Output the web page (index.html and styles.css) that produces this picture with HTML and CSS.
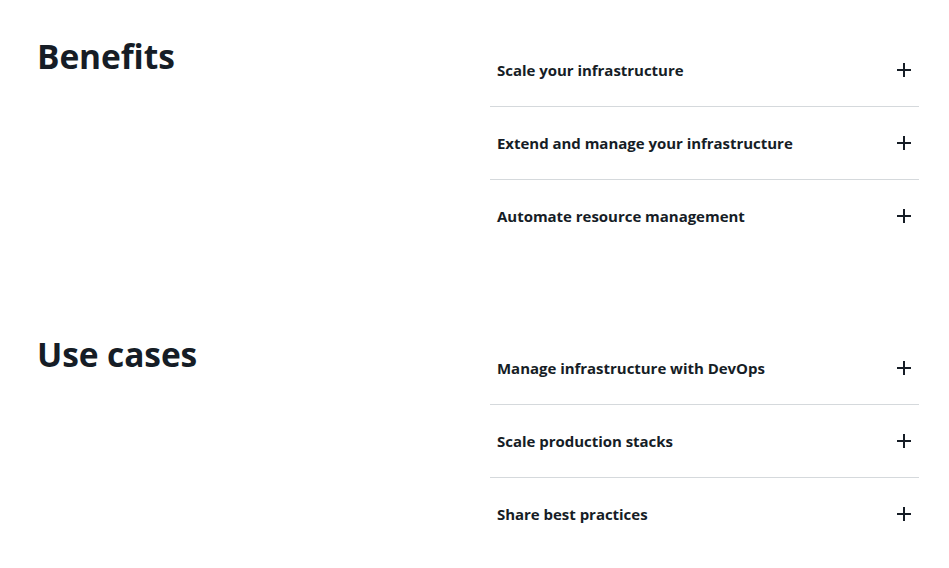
FILE: index.html
```html
<!DOCTYPE html>
<html lang="en">
<head>
<meta charset="utf-8">
<link rel="stylesheet" href="styles.css">
</head>
<body>
<main class="page">
  <section class="block">
    <h2 class="block-title">Benefits</h2>
    <ul class="accordion">
      <li class="item"><span class="item-label">Scale your infrastructure</span><svg class="plus" viewBox="0 0 16 16"><path d="M8 1v14M1 8h14"/></svg></li>
      <li class="item"><span class="item-label">Extend and manage your infrastructure</span><svg class="plus" viewBox="0 0 16 16"><path d="M8 1v14M1 8h14"/></svg></li>
      <li class="item"><span class="item-label">Automate resource management</span><svg class="plus" viewBox="0 0 16 16"><path d="M8 1v14M1 8h14"/></svg></li>
    </ul>
  </section>
  <section class="block">
    <h2 class="block-title">Use cases</h2>
    <ul class="accordion">
      <li class="item"><span class="item-label">Manage infrastructure with DevOps</span><svg class="plus" viewBox="0 0 16 16"><path d="M8 1v14M1 8h14"/></svg></li>
      <li class="item"><span class="item-label">Scale production stacks</span><svg class="plus" viewBox="0 0 16 16"><path d="M8 1v14M1 8h14"/></svg></li>
      <li class="item"><span class="item-label">Share best practices</span><svg class="plus" viewBox="0 0 16 16"><path d="M8 1v14M1 8h14"/></svg></li>
    </ul>
  </section>
</main>
</body>
</html>
```

FILE: styles.css
```css
html, body {
  margin: 0;
  padding: 0;
  background: #ffffff;
}
body {
  font-family: "Open Sans", "Noto Sans", sans-serif;
  color: #161d26;
}
.page {
  padding: 34px 30px 0 37px;
}
.block {
  display: grid;
  grid-template-columns: 453px 1fr;
  margin-bottom: 80px;
}
.block:last-child {
  margin-bottom: 0;
}
.block-title {
  margin: 0;
  font-size: 33.5px;
  font-weight: 700;
  line-height: 44px;
  letter-spacing: -0.1px;
}
.accordion {
  list-style: none;
  margin: 0;
  padding: 0;
}
.item {
  display: flex;
  align-items: center;
  justify-content: space-between;
  height: 72px;
  padding: 0 7px;
  border-bottom: 1px solid #d5d9dc;
}
.item:last-child {
  border-bottom: none;
}
.item-label {
  font-size: 15px;
  font-weight: 700;
  letter-spacing: -0.03px;
}
.plus {
  width: 16px;
  height: 16px;
  fill: none;
  stroke: #161d26;
  stroke-width: 2;
}
```
